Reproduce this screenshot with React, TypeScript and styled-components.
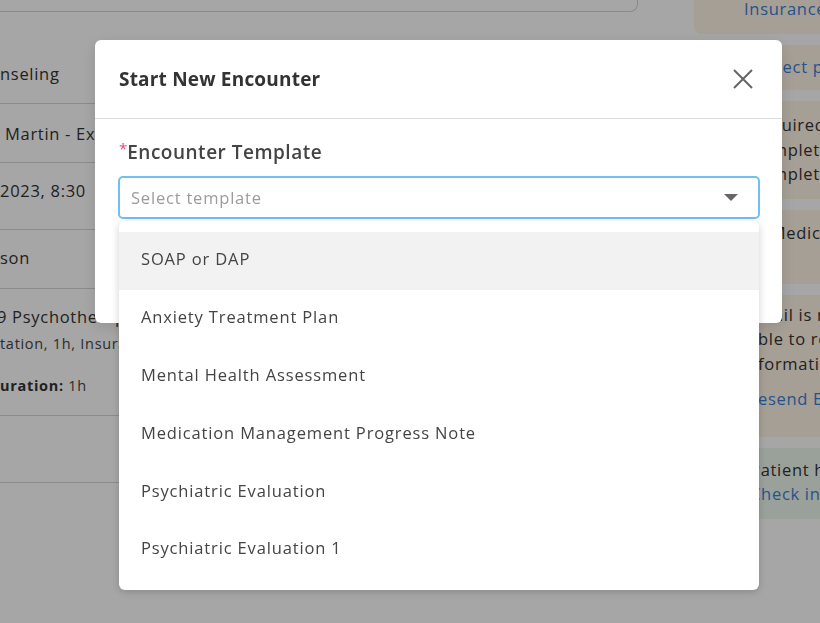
import styled, { createGlobalStyle } from "styled-components";

const GlobalStyle = createGlobalStyle`
  html, body {
    margin: 0;
    padding: 0;
    width: 820px;
    height: 623px;
    overflow: hidden;
    background: #fff;
    font-family: "Open Sans", "Liberation Sans", sans-serif;
    letter-spacing: 0.7px;
    color: #333;
  }
`;

const Page = styled.div`
  display: flex;
  width: 820px;
  height: 623px;
  overflow: hidden;
`;

const Main = styled.div`
  width: 638px;
  flex-shrink: 0;
`;

const TopCard = styled.div`
  height: 20px;
  margin-top: -9px;
  border: 1px solid #d4d4d4;
  border-top: none;
  border-radius: 0 0 8px 0;
  border-left: none;
`;

const Row = styled.div<{ $pt: number; $h: number }>`
  height: ${(p) => p.$h}px;
  padding-top: ${(p) => p.$pt}px;
  box-sizing: border-box;
  border-bottom: 1px solid #d6d6d6;
  font-size: 16.5px;
  line-height: 24px;
  white-space: nowrap;
`;

const SubLine = styled.div<{ $mt?: number }>`
  font-size: 14.5px;
  line-height: 20px;
  color: #444;
  margin-top: ${(p) => p.$mt ?? 0}px;
  b {
    font-weight: 700;
    color: #333;
  }
`;

const Sidebar = styled.div`
  margin-left: 56px;
  width: 200px;
  flex-shrink: 0;
  display: flex;
  flex-direction: column;
  gap: 11px;
`;

const Card = styled.div<{ $tone: "warn" | "ok"; $pt: number; $pb: number; $pl: number; $mt?: number }>`
  background: ${(p) => (p.$tone === "warn" ? "#fff4e5" : "#edf7ed")};
  border-radius: 8px;
  padding: ${(p) => `${p.$pt}px 0 ${p.$pb}px ${p.$pl}px`};
  margin-top: ${(p) => p.$mt ?? 0}px;
  font-size: 16.5px;
  line-height: 24.5px;
  white-space: nowrap;
  color: #333;
`;

const CardLink = styled.div<{ $mt?: number }>`
  color: #3a7fd5;
  margin-top: ${(p) => p.$mt ?? 0}px;
`;

const Overlay = styled.div`
  position: fixed;
  inset: 0;
  background: rgba(0, 0, 0, 0.35);
  display: flex;
  align-items: flex-start;
  padding: 40px 0 0 95px;
`;

const Modal = styled.div`
  width: 687px;
  height: 283px;
  background: #fff;
  border-radius: 6px;
  box-shadow: 0 4px 16px rgba(0, 0, 0, 0.12);
  display: flex;
  flex-direction: column;
`;

const Header = styled.div`
  height: 78px;
  flex-shrink: 0;
  border-bottom: 1px solid #dcdcdc;
  display: flex;
  align-items: center;
  justify-content: space-between;
  padding: 0 28px 0 24px;
`;

const Title = styled.div`
  font-size: 19px;
  font-weight: 700;
  letter-spacing: 0.2px;
  color: #333;
`;

const CloseBtn = styled.button`
  border: none;
  background: none;
  padding: 0;
  width: 22px;
  height: 22px;
  display: flex;
  align-items: center;
  justify-content: center;
  cursor: pointer;
`;

const Body = styled.div`
  padding: 17px 22px 0 23px;
`;

const Label = styled.div`
  font-size: 19px;
  line-height: 24px;
  font-weight: 600;
  letter-spacing: 0.5px;
  color: #444;
  margin-left: 1px;
  span {
    color: #e0487a;
    font-size: 15px;
    vertical-align: 5px;
    font-weight: 400;
    letter-spacing: 0;
  }
`;

const SelectWrap = styled.div`
  position: relative;
  margin-top: 12px;
`;

const SelectBox = styled.div`
  height: 43px;
  box-sizing: border-box;
  border: 2px solid #6ec1f2;
  border-radius: 5px;
  display: flex;
  align-items: center;
  justify-content: space-between;
  padding: 0 20px 1px 11px;
  font-size: 16.5px;
  letter-spacing: 0.8px;
  color: #9b9b9b;
`;

const Caret = styled.div`
  width: 0;
  height: 0;
  border-left: 7px solid transparent;
  border-right: 7px solid transparent;
  border-top: 7px solid #666;
  margin-top: 1px;
`;

const Menu = styled.div`
  position: absolute;
  top: calc(100% + 2px);
  left: 1px;
  right: 1px;
  background: #fff;
  border-radius: 6px;
  box-shadow: 0 2px 8px rgba(0, 0, 0, 0.18);
  padding: 11px 0 11px;
`;

const MenuItem = styled.div<{ $active?: boolean }>`
  height: 57.8px;
  box-sizing: border-box;
  display: flex;
  align-items: center;
  padding: 0 0 4px 22px;
  font-size: 16.5px;
  letter-spacing: 0.85px;
  color: #444;
  background: ${(p) => (p.$active ? "#f2f2f2" : "#fff")};
`;

const templates = [
  "SOAP or DAP",
  "Anxiety Treatment Plan",
  "Mental Health Assessment",
  "Medication Management Progress Note",
  "Psychiatric Evaluation",
  "Psychiatric Evaluation 1",
];

export default function App() {
  return (
    <>
      <GlobalStyle />
      <Page>
        <Main>
          <TopCard />
          <Row $h={92} $pt={50}>nseling</Row>
          <Row $h={59} $pt={18}>&nbsp;Martin - Exam</Row>
          <Row $h={67} $pt={16}>2023, 8:30</Row>
          <Row $h={59} $pt={16}>son</Row>
          <Row $h={127} $pt={16}>
            <div style={{ marginLeft: -3 }}>9 Psychotherapy</div>
            <SubLine $mt={5}>tation, 1h, Insurance</SubLine>
            <SubLine $mt={22}>
              <b>uration:</b> 1h
            </SubLine>
          </Row>
          <Row $h={67} $pt={16} />
        </Main>
        <Sidebar>
          <Card $tone="warn" $pt={12} $pb={12} $pl={50} $mt={-15}>
            <CardLink>Insurance</CardLink>
          </Card>
          <Card $tone="warn" $pt={10} $pb={11} $pl={64}>
            <CardLink>Select payer</CardLink>
          </Card>
          <Card $tone="warn" $pt={12} $pb={12} $pl={56}>
            <div>Required</div>
            <div>Complete</div>
            <div>Completion</div>
          </Card>
          <Card $tone="warn" $pt={11} $pb={14} $pl={48}>
            <div>No Medication</div>
            <div>Alert</div>
          </Card>
          <Card $tone="warn" $pt={8} $pb={25} $pl={64}>
            <div>mail is not</div>
            <div>ble to receive</div>
            <div>formation</div>
            <CardLink $mt={11}>esend Email</CardLink>
          </Card>
          <Card $tone="ok" $pt={10} $pb={12} $pl={56}>
            <div>Patient has</div>
            <CardLink>Check insurance</CardLink>
          </Card>
        </Sidebar>
      </Page>
      <Overlay>
        <Modal>
          <Header>
            <Title>Start New Encounter</Title>
            <CloseBtn aria-label="Close">
              <svg width="22" height="22" viewBox="0 0 22 22">
                <path d="M2 2 L20 20 M20 2 L2 20" stroke="#666" strokeWidth="2" fill="none" />
              </svg>
            </CloseBtn>
          </Header>
          <Body>
            <Label>
              <span>*</span>Encounter Template
            </Label>
            <SelectWrap>
              <SelectBox>
                Select template
                <Caret />
              </SelectBox>
              <Menu>
                {templates.map((t, i) => (
                  <MenuItem key={t} $active={i === 0}>
                    {t}
                  </MenuItem>
                ))}
              </Menu>
            </SelectWrap>
          </Body>
        </Modal>
      </Overlay>
    </>
  );
}
